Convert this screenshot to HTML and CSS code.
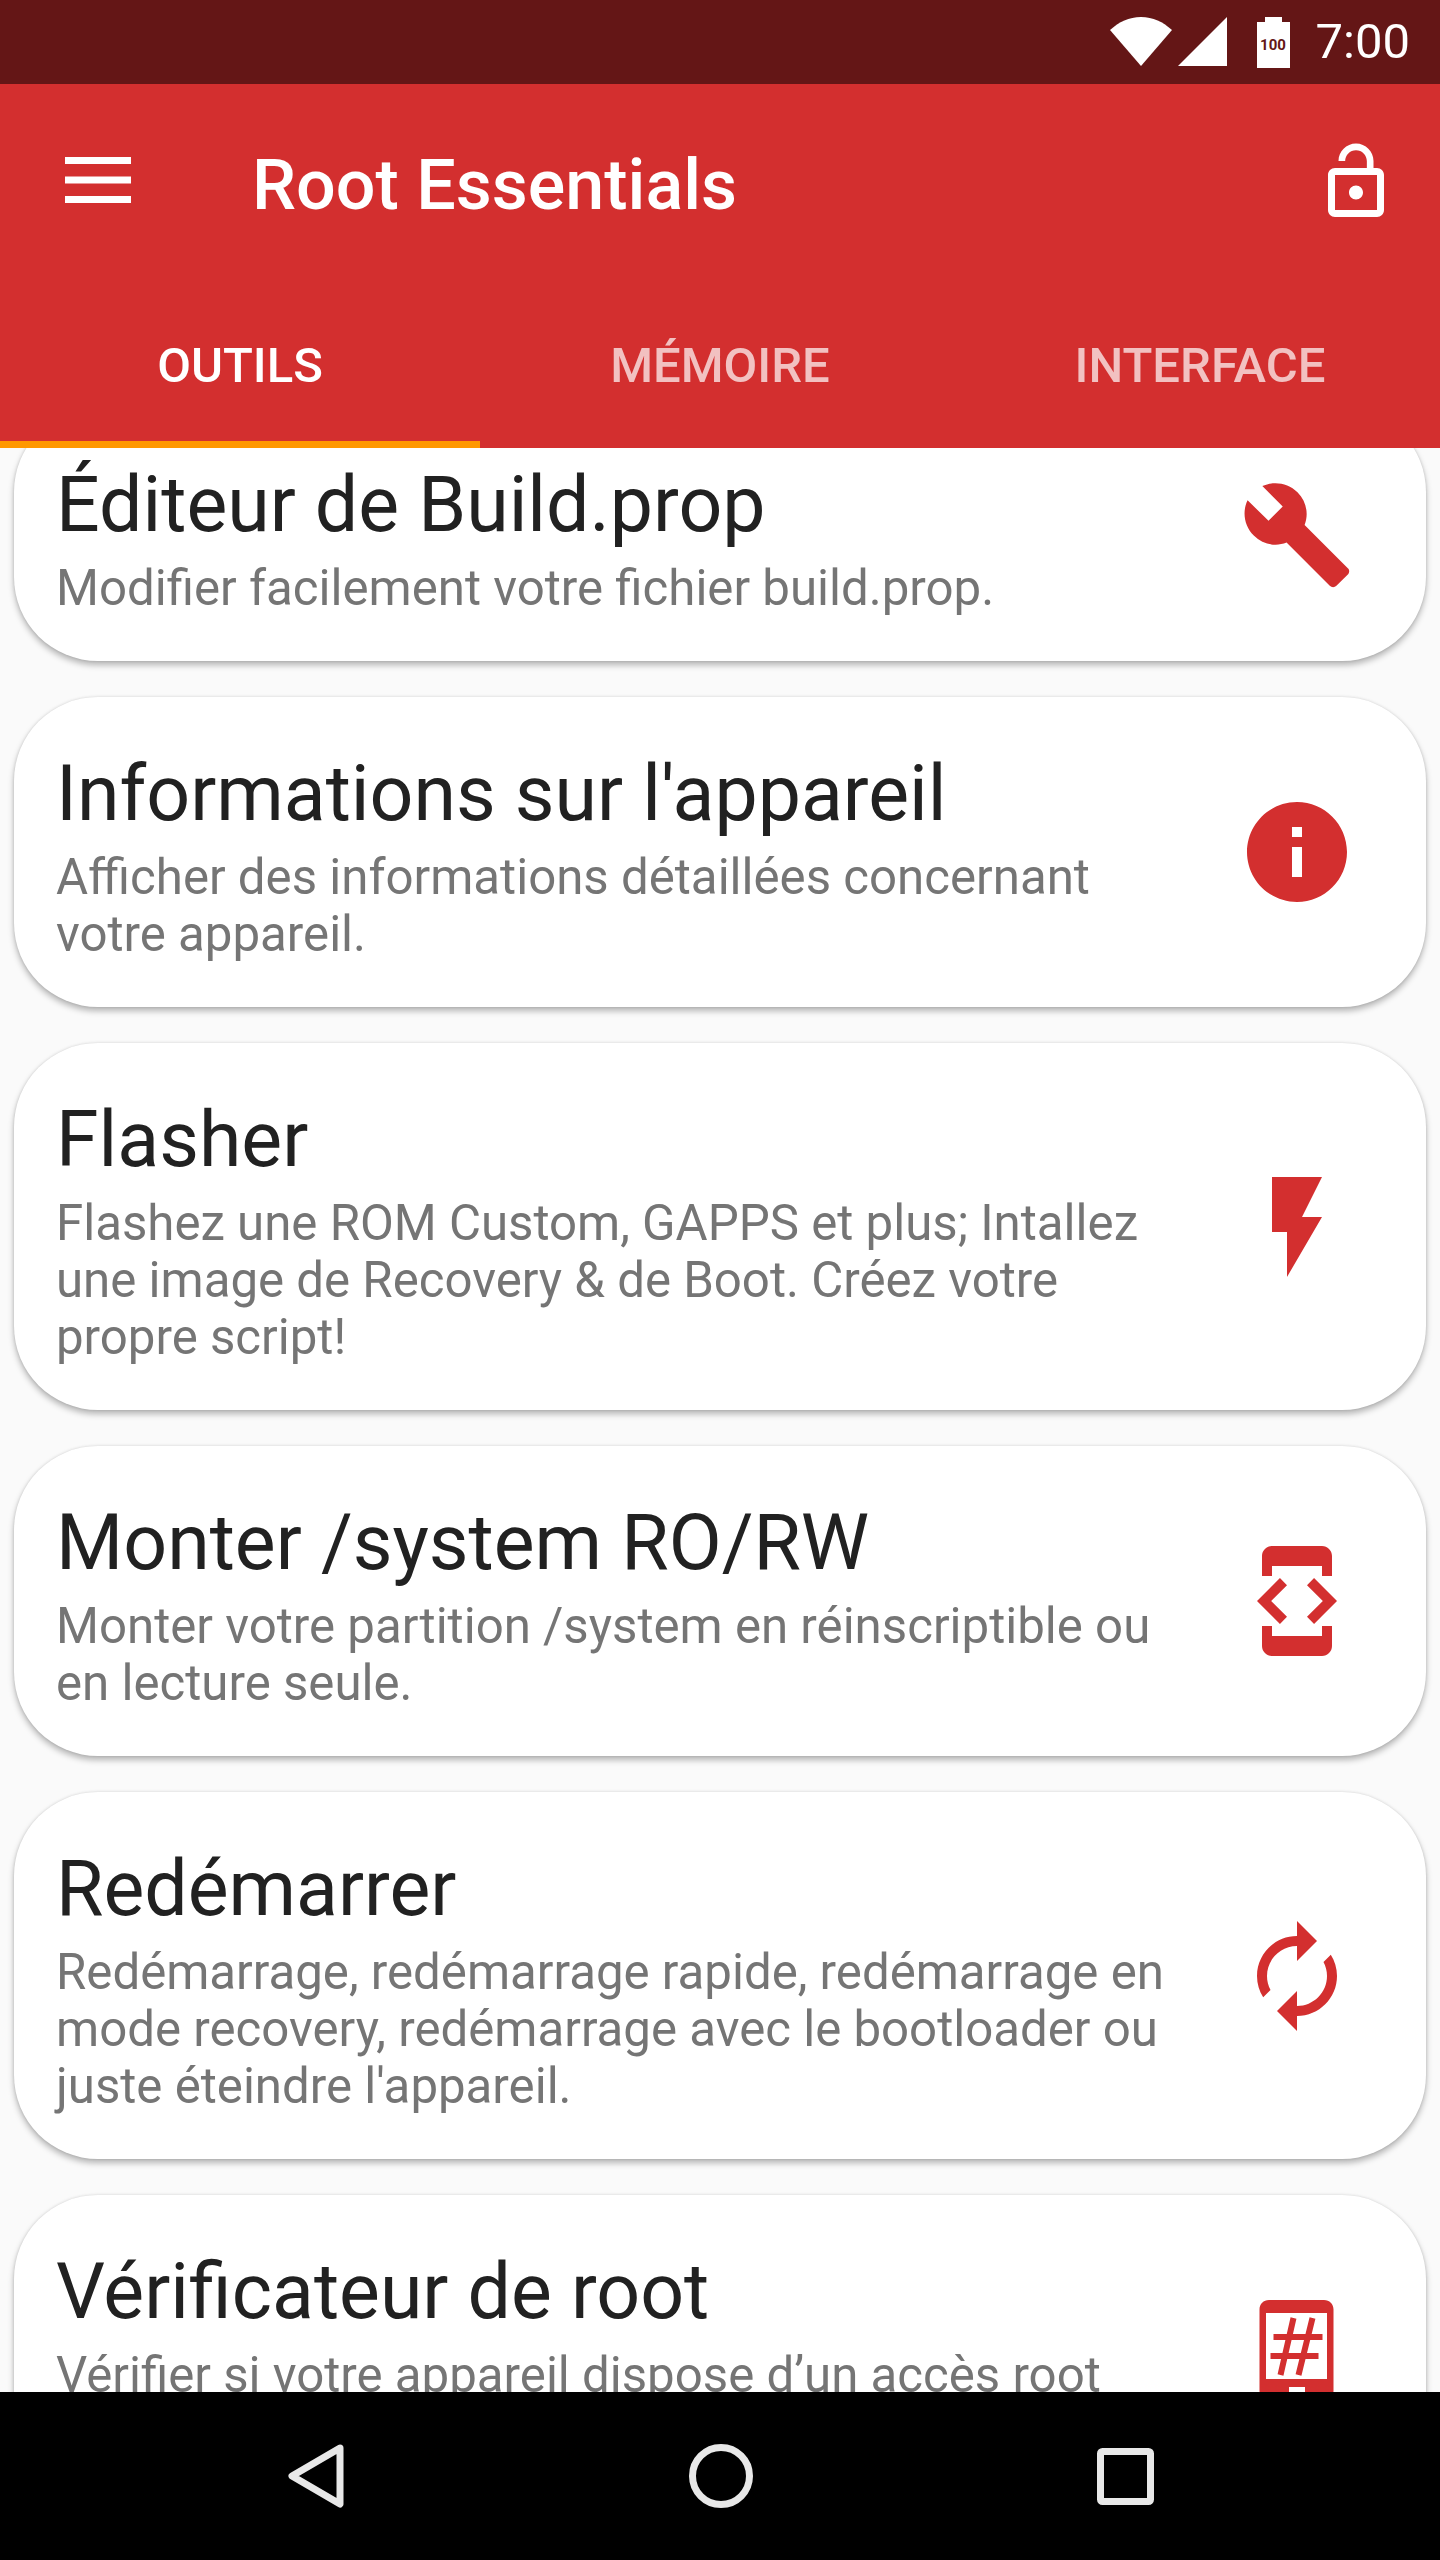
FILE: index.html
```html
<!DOCTYPE html>
<html>
  <head>
    <meta name="viewport" content="width=device-width, initial-scale=1">
    <link rel="stylesheet" href="styles.css">
  </head>
  <body>
    <div class="screen">
      <div class="statusbar">
        <svg class="st-wifi" viewBox="0 0 62 49"><path d="M0 13C9 5 19 0 31 0s22 5 31 13L31 49z"/></svg>
        <svg class="st-signal" viewBox="0 0 49 49"><path d="M0 49L49 0v49z"/></svg>
        <div class="st-battery"><span>100</span></div>
        <span class="st-time">7:00</span>
      </div>

      <div class="toolbar">
        <svg class="menu" viewBox="0 0 66 46"><path d="M0 0h66v7H0zM0 19.500h66v7H0zM0 39h66v7H0z"/></svg>
        <div class="app-title">Root Essentials</div>
        <svg class="lock" viewBox="0 0 24 24"><path d="M12 17c1.100 0 2-.9 2-2s-.9-2-2-2-2 .9-2 2 .9 2 2 2zm6-9h-1V6c0-2.760-2.240-5-5-5S7 3.240 7 6h1.900c0-1.710 1.390-3.100 3.100-3.100 1.710 0 3.100 1.390 3.100 3.100v2H6c-1.100 0-2 .9-2 2v10c0 1.100.9 2 2 2h12c1.100 0 2-.9 2-2V10c0-1.100-.9-2-2-2zm0 12H6V10h12v10z"/></svg>
      </div>

      <div class="tabs">
        <div class="tab active">OUTILS</div>
        <div class="tab">MÉMOIRE</div>
        <div class="tab">INTERFACE</div>
      </div>

      <div class="content">
        <div class="list">
          <div class="card">
            <div class="card-text">
              <div class="card-title">Éditeur de Build.prop</div>
              <div class="card-desc">Modifier facilement votre fichier build.prop.</div>
            </div>
            <svg class="card-icon" viewBox="0 0 24 24"><path transform="translate(12 12) scale(.95) translate(-12 -12)" d="M22.700 19l-9.100-9.100c.9-2.300.4-5-1.500-6.900-2-2-5-2.400-7.400-1.300L9 6 6 9 1.600 4.700C.4 7.100.9 10.100 2.900 12.100c1.900 1.900 4.600 2.400 6.900 1.500l9.100 9.100c.4.4 1 .4 1.400 0l2.300-2.300c.5-.4.5-1.100.1-1.400z"/></svg>
          </div>

          <div class="card">
            <div class="card-text">
              <div class="card-title">Informations sur l'appareil</div>
              <div class="card-desc">Afficher des informations détaillées concernant votre appareil.</div>
            </div>
            <svg class="card-icon" viewBox="0 0 24 24"><path d="M12 2C6.480 2 2 6.480 2 12s4.480 10 10 10 10-4.480 10-10S17.520 2 12 2zm1 15h-2v-6h2v6zm0-8h-2V7h2v2z"/></svg>
          </div>

          <div class="card">
            <div class="card-text">
              <div class="card-title">Flasher</div>
              <div class="card-desc">Flashez une ROM Custom, GAPPS et plus; Intallez une image de Recovery &amp; de Boot. Créez votre propre script!</div>
            </div>
            <svg class="card-icon" viewBox="0 0 24 24"><path d="M7 2v11h3v9l7-12h-4l4-8z"/></svg>
          </div>

          <div class="card">
            <div class="card-text">
              <div class="card-title">Monter /system RO/RW</div>
              <div class="card-desc">Monter votre partition /system en réinscriptible ou en lecture seule.</div>
            </div>
            <svg class="card-icon" viewBox="0 0 24 24"><path d="M7 5h10v2h2V3c0-1.100-.9-1.990-2-1.990L7 1c-1.100 0-2 .9-2 2v4h2V5zm8.410 11.590L20 12l-4.590-4.590L14 8.830 17.170 12 14 15.170l1.410 1.420zM10 15.170L6.830 12 10 8.830 8.590 7.410 4 12l4.590 4.590L10 15.170zM17 19H7v-2H5v4c0 1.100.9 2 2 2h10c1.100 0 2-.9 2-2v-4h-2v2z"/></svg>
          </div>

          <div class="card">
            <div class="card-text">
              <div class="card-title">Redémarrer</div>
              <div class="card-desc">Redémarrage, redémarrage rapide, redémarrage en mode recovery, redémarrage avec le bootloader ou juste éteindre l'appareil.</div>
            </div>
            <svg class="card-icon" viewBox="0 0 24 24"><path transform="translate(24 0) scale(-1 1)" d="M12 4V1L8 5l4 4V6c3.310 0 6 2.690 6 6 0 1.010-.25 1.970-.7 2.800l1.460 1.460C19.540 15.030 20 13.570 20 12c0-4.420-3.580-8-8-8zm0 14c-3.310 0-6-2.690-6-6 0-1.010.25-1.970.7-2.800L5.240 7.740C4.460 8.970 4 10.430 4 12c0 4.420 3.580 8 8 8v3l4-4-4-4v3z"/></svg>
          </div>

          <div class="card">
            <div class="card-text">
              <div class="card-title">Vérificateur de root</div>
              <div class="card-desc">Vérifier si votre appareil dispose d’un accès root fonctionnel.</div>
            </div>
            <svg class="card-icon" viewBox="0 0 120 120">
              <path fill-rule="evenodd" d="M32 10h55c5.500 0 9.500 4 9.500 9.500v81c0 5.500-4 9.500-9.500 9.500H32c-5.500 0-9.500-4-9.500-9.500v-81c0-5.500 4-9.500 9.500-9.500zM29 23v66h61V23zM52 97v6h16v-6z"/>
              <path class="hash" d="M36.500 47h49M33.500 66h48M56.500 28L43.500 85M75.500 28L61.500 85"/>
            </svg>
          </div>
        </div>
      </div>

      <div class="navbar">
        <svg class="nav-back" viewBox="0 0 56 64"><path d="M52 4L4 32l48 28z"/></svg>
        <svg class="nav-home" viewBox="0 0 64 64"><circle cx="32" cy="32" r="28.500"/></svg>
        <svg class="nav-recent" viewBox="0 0 57 57"><rect x="3.500" y="3.500" width="50" height="50" rx="2"/></svg>
      </div>
    </div>
  </body>
</html>
```

FILE: styles.css
```css
body { margin: 0; font-family: Roboto, sans-serif; }
.screen {
  width: 1440px;
  height: 2560px;
  display: flex;
  flex-direction: column;
  overflow: hidden;
  background: #fafafa;
}

/* status bar */
.statusbar {
  height: 84px;
  flex: none;
  background: #641616;
  display: flex;
  align-items: center;
  padding-right: 30px;
  justify-content: flex-end;
  color: white;
}
.statusbar svg { fill: white; }
.st-wifi { width: 62px; height: 49px; margin-right: 6px; margin-top: -1px; }
.st-signal { width: 49px; height: 49px; margin-right: 30px; margin-top: -1px; }
.st-battery {
  width: 33px;
  height: 46px;
  margin-top: 5px;
  margin-right: 26px;
  background: white;
  position: relative;
  color: #641616;
  font-size: 15px;
  font-weight: 700;
  line-height: 46px;
  text-align: center;
}
.st-battery::before {
  content: "";
  position: absolute;
  top: -5px;
  left: 8px;
  width: 17px;
  height: 5px;
  background: white;
}
.st-time { font-size: 49px; line-height: 49px; margin-top: -2px; }

/* toolbar */
.toolbar {
  height: 196px;
  flex: none;
  background: #d32f2f;
  display: flex;
  align-items: center;
  color: white;
}
.menu { width: 66px; height: 46px; fill: white; margin-left: 65px; margin-top: -4px; }
.app-title { font-size: 70px; font-weight: 500; margin-left: 121px; flex: 1; margin-top: 6px; }
.lock { width: 84px; height: 84px; fill: white; margin-right: 42px; margin-top: -1px; }

/* tabs */
.tabs {
  height: 168px;
  flex: none;
  background: #d32f2f;
  display: flex;
}
.tab {
  flex: 1;
  text-align: center;
  font-size: 49px;
  font-weight: 500;
  line-height: 158px;
  padding-top: 7px;
  color: rgba(255, 255, 255, 0.7);
  box-sizing: border-box;
  border-bottom: 7px solid transparent;
}
.tab.active { color: white; border-bottom-color: #ff9800; }

/* list of cards */
.content { flex: 1; overflow: hidden; }
.list {
  margin-top: -40px;
  padding: 0 14px;
  display: flex;
  flex-direction: column;
  gap: 36px;
}
.card {
  background: white;
  border-radius: 84px;
  box-shadow: 0 4px 6px rgba(0, 0, 0, 0.28), 0 0 3px rgba(0, 0, 0, 0.12);
  display: flex;
  align-items: center;
  padding: 47px 42px 44px 42px;
}
.card-text { flex: 1; }
.card-title { font-size: 77px; line-height: 100px; color: #212121; margin-bottom: 5px; }
.card-desc { font-size: 49.2px; line-height: 57px; color: #757575; }
.card-icon { width: 120px; height: 120px; flex: none; fill: #d32f2f; margin: 0 27px 3px 47px; }
.hash { fill: none; stroke: #d32f2f; stroke-width: 6; }

/* bottom nav */
.navbar {
  height: 168px;
  flex: none;
  background: black;
  display: flex;
  align-items: center;
  padding-left: 288px;
}
.navbar svg { fill: none; stroke: #e8e8e8; stroke-width: 7; stroke-linejoin: round; }
.nav-back { width: 56px; height: 64px; }
.nav-home { width: 64px; height: 64px; margin-left: 345px; }
.nav-recent { width: 57px; height: 57px; margin-left: 344px; }
```
